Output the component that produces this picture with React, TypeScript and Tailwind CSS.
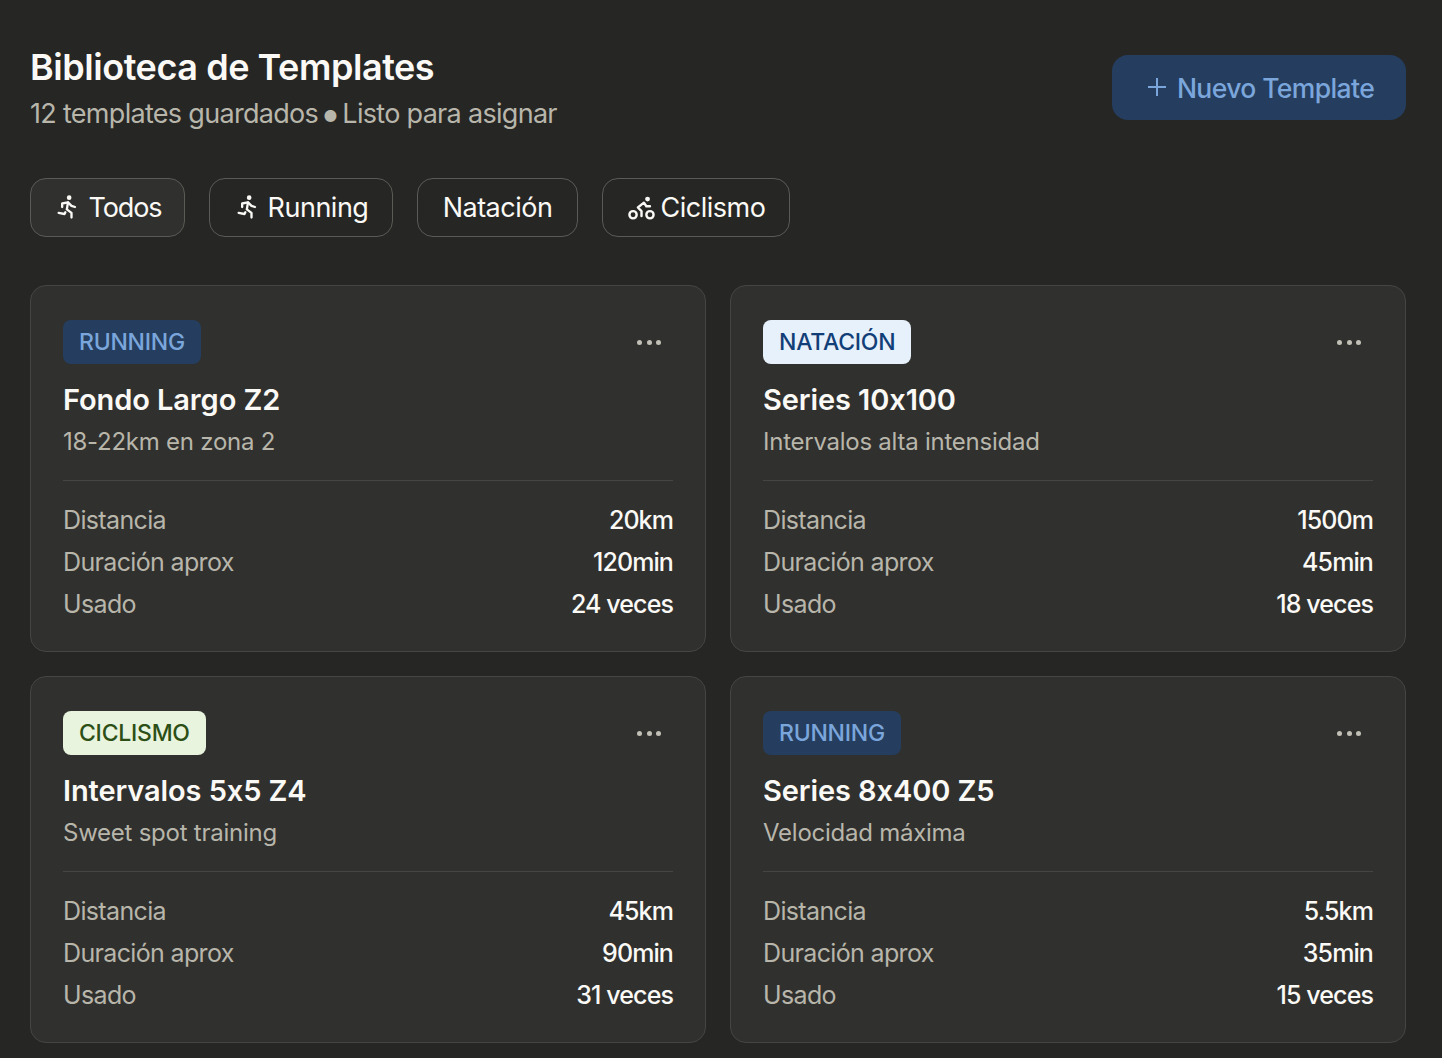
import { TbRun, TbBike } from "react-icons/tb";

const FONT = "font-['Inter',sans-serif]";

type Sport = "RUNNING" | "NATACIÓN" | "CICLISMO";

const BADGES: Record<Sport, string> = {
  RUNNING: "bg-[#253e5f] text-[#7ba6dc]",
  "NATACIÓN": "bg-[#e7f1fb] text-[#123f78]",
  CICLISMO: "bg-[#e9f4de] text-[#2c4f16]",
};

const TEMPLATES: { sport: Sport; name: string; desc: string; dist: string; dur: string; used: string }[] = [
  { sport: "RUNNING", name: "Fondo Largo Z2", desc: "18-22km en zona 2", dist: "20km", dur: "120min", used: "24 veces" },
  { sport: "NATACIÓN", name: "Series 10x100", desc: "Intervalos alta intensidad", dist: "1500m", dur: "45min", used: "18 veces" },
  { sport: "CICLISMO", name: "Intervalos 5x5 Z4", desc: "Sweet spot training", dist: "45km", dur: "90min", used: "31 veces" },
  { sport: "RUNNING", name: "Series 8x400 Z5", desc: "Velocidad máxima", dist: "5.5km", dur: "35min", used: "15 veces" },
];

function Stat({ label, value }: { label: string; value: string }) {
  return (
    <div className="flex h-[42px] items-center justify-between text-[25px]">
      <span className="tracking-[-0.65px] text-[#b8b6ab]">{label}</span>
      <span className="font-medium tracking-[-0.9px] text-[#faf9f5]">{value}</span>
    </div>
  );
}

function Card({ t }: { t: (typeof TEMPLATES)[number] }) {
  return (
    <div className="h-[367px] rounded-[16px] border border-[#454542] bg-[#30302e] px-[32px] pt-[34px]">
      <div className="flex items-center justify-between">
        <span className={`flex h-[44px] items-center rounded-[8px] px-[16px] text-[23px] font-medium tracking-[-0.25px] ${BADGES[t.sport]}`}>{t.sport}</span>
        <div className="flex gap-[4.5px] pr-[12px]">
          <span className="h-[5px] w-[5px] rounded-full bg-[#c2c0b6]" />
          <span className="h-[5px] w-[5px] rounded-full bg-[#c2c0b6]" />
          <span className="h-[5px] w-[5px] rounded-full bg-[#c2c0b6]" />
        </div>
      </div>
      <h3 className="mt-[15px] text-[29px] leading-[42px] font-semibold tracking-[-0.1px] text-[#faf9f5]">{t.name}</h3>
      <p className="text-[24px] leading-[42px] tracking-[-0.25px] text-[#b8b6ab]">{t.desc}</p>
      <div className="mt-[17px] border-t border-[#454542] pt-[19px]">
        <Stat label="Distancia" value={t.dist} />
        <Stat label="Duración aprox" value={t.dur} />
        <Stat label="Usado" value={t.used} />
      </div>
    </div>
  );
}

export default function App() {
  return (
    <div className={`${FONT} min-h-[1058px] overflow-hidden bg-[#262624] pr-[36px] pl-[30px]`}>
      <header className="flex items-start justify-between pt-[42px]">
        <div>
          <h1 className="text-[36px] leading-[50px] font-semibold tracking-[-0.45px] text-[#faf9f5]">Biblioteca de Templates</h1>
          <p className="text-[27px] leading-[44px] tracking-[-0.7px] text-[#b8b6ab]">
            12 templates guardados<span className="tracking-[-5.8px]"> </span><span className="align-[-4px] text-[38px] leading-[0]">•</span><span className="tracking-[-5.8px]"> </span>Listo para asignar
          </p>
        </div>
        <button className="mt-[13px] flex h-[65px] w-[294px] items-center justify-center gap-[10px] rounded-[16px] bg-[#253e5f] pt-[2px] pl-[3px] text-[26.5px] font-medium tracking-[-0.6px] text-[#7ba6dc]">
          <svg className="-mt-[3px]" width="20" height="20" viewBox="0 0 20 20" fill="none" stroke="currentColor" strokeWidth="2"><path d="M10 1v18M1 10h18" /></svg>
          Nuevo Template
        </button>
      </header>

      <div className="mt-[42px] flex gap-[24px]">
        <button className="flex h-[59px] w-[155px] items-center justify-center gap-[7px] rounded-[16px] border border-[#5a5a56] bg-[#30302e] pt-[2px] text-[27px] tracking-[-1.1px] text-[#faf9f5]">
          <TbRun size={28} className="-mt-[3px]" />Todos
        </button>
        <button className="flex h-[59px] w-[184px] items-center justify-center gap-[6px] rounded-[16px] border border-[#5a5a56] pt-[2px] text-[27px] tracking-[-0.5px] text-[#faf9f5]">
          <TbRun size={28} className="-mt-[3px]" />Running
        </button>
        <button className="flex h-[59px] w-[161px] items-center justify-center rounded-[16px] border border-[#5a5a56] pt-[2px] text-[27px] tracking-[-0.5px] text-[#faf9f5]">
          Natación
        </button>
        <button className="flex h-[59px] w-[188px] items-center justify-center gap-[5px] rounded-[16px] border border-[#5a5a56] pt-[2px] text-[27px] tracking-[-0.5px] text-[#faf9f5]">
          <TbBike size={29} className="-mt-[2px]" />Ciclismo
        </button>
      </div>

      <div className="mt-[48px] grid grid-cols-2 gap-[24px]">
        {TEMPLATES.map((t) => <Card key={t.name} t={t} />)}
      </div>
    </div>
  );
}
